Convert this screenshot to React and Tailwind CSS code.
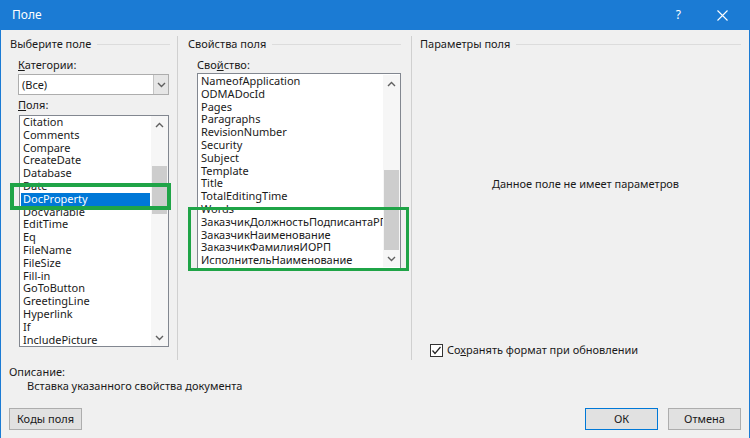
import React from "react";

const leftItems = ["Citation","Comments","Compare","CreateDate","Database","Date","DocProperty","DocVariable","EditTime","Eq","FileName","FileSize","Fill-in","GoToButton","GreetingLine","Hyperlink","If","IncludePicture"];
const midItems = ["NameofApplication","ODMADocId","Pages","Paragraphs","RevisionNumber","Security","Subject","Template","Title","TotalEditingTime","Words","ЗаказчикДолжностьПодписантаРГ","ЗаказчикНаименование","ЗаказчикФамилияИОРП","ИсполнительНаименование"];

function Chevron({ up }) {
  return (
    <svg width="9" height="6" viewBox="0 0 9 6">
      <path d={up ? "M1 5 L4.5 1.5 L8 5" : "M1 1 L4.5 4.5 L8 1"} fill="none" stroke="#606060" strokeWidth="1.4" />
    </svg>
  );
}

function ScrollBar({ thumbTop, thumbH }) {
  return (
    <div className="w-[17px] flex flex-col bg-[#f6f6f6]">
      <div className="h-[17px] flex items-center justify-center"><Chevron up /></div>
      <div className="flex-1 flex flex-col px-[1px]">
        <div style={{ marginTop: thumbTop, height: thumbH }} className="bg-[#cdcdcd]" />
      </div>
      <div className="h-[17px] flex items-center justify-center"><Chevron /></div>
    </div>
  );
}

function GroupHeader({ text }) {
  return (
    <div className="h-[16px] flex items-center gap-[6px]">
      <span className="whitespace-nowrap">{text}</span>
      <div className="flex-1 h-px bg-[#dcdcdc]" />
    </div>
  );
}

export default function App() {
  return (
    <div className="w-[750px] h-[438px] flex flex-col border-x border-[#1b7bd4] bg-[#f0f0f0] text-[11px] leading-[16px] text-[#1a1a1a] font-['Noto_Sans',sans-serif] overflow-hidden relative">
      {/* Title bar */}
      <div className="h-[30px] bg-[#1b7bd4] flex items-center text-white pl-[11px]">
        <span className="text-[12px]">Поле</span>
        <div className="flex-1" />
        <span className="text-[12px] mr-[36px]">?</span>
        <svg width="11" height="11" viewBox="0 0 11 11" className="mr-[21px]">
          <path d="M0.5 0.5 L10.5 10.5 M10.5 0.5 L0.5 10.5" stroke="white" strokeWidth="1.1" />
        </svg>
      </div>

      {/* Body */}
      <div className="flex-1 flex flex-col relative">
        <div className="h-[330px] flex">
          {/* Left column */}
          <div className="w-[176px] pt-[6px] pl-[9px] pr-[7px] flex flex-col">
            <GroupHeader text="Выберите поле" />
            <div className="pl-[8px] pr-[1px] mt-[5px]">
              <div><span className="underline">К</span>атегории:</div>
              <div className="h-[21px] mt-[1px] flex bg-white border border-[#adadad]">
                <div className="flex-1 pl-[3px] flex items-center">(Все)</div>
                <div className="w-[15px] bg-[#e6e6e6] border-l border-[#c4c4c4] flex items-center justify-center"><Chevron /></div>
              </div>
              <div className="mt-[2px]"><span className="underline">П</span>оля:</div>
              <div className="mt-[2px] h-[232px] flex bg-white border border-[#828790] ml-[1px]">
                <div className="flex-1 flex flex-col pl-[1px] pr-[1px]">
                  {leftItems.map((t) => (
                    <div key={t} className={"h-[12.8px] leading-[12.8px] pl-[2px] whitespace-nowrap " + (t === "DocProperty" ? "bg-[#0078d7] text-white" : "")}>{t}</div>
                  ))}
                </div>
                <ScrollBar thumbTop={33} thumbH={48} />
              </div>
            </div>
          </div>
          <div className="w-px mt-[6px] bg-[#d0d0d0]" />

          {/* Middle column */}
          <div className="w-[233px] pt-[6px] pl-[10px] pr-[10px] flex flex-col">
            <GroupHeader text="Свойства поля" />
            <div className="pl-[9px] mt-[5px]">
              <div>Сво<span className="underline">й</span>ство:</div>
              <div className="h-[196px] flex bg-white border border-[#828790] py-[1px]">
                <div className="flex-1 flex flex-col pl-[3px] overflow-hidden">
                  {midItems.map((t) => (
                    <div key={t} className="h-[12.8px] leading-[12.8px] whitespace-nowrap">{t}</div>
                  ))}
                </div>
                <ScrollBar thumbTop={78} thumbH={80} />
              </div>
            </div>
          </div>
          <div className="w-px mt-[6px] bg-[#d0d0d0]" />

          {/* Right column */}
          <div className="flex-1 pt-[6px] pl-[8px] pr-[8px] flex flex-col">
            <GroupHeader text="Параметры поля" />
            <div className="flex-1 flex flex-col">
              <div className="h-[124px]" />
              <div className="text-center pl-[10px]">Данное поле не имеет параметров</div>
              <div className="flex-1" />
              <div className="flex items-center gap-[4px] pl-[10px] mb-[2px]">
                <div className="w-[13px] h-[13px] border border-[#333] bg-white flex items-center justify-center">
                  <svg width="11" height="11" viewBox="0 0 11 11"><path d="M1.5 5.5 L4 8.5 L9.5 2" fill="none" stroke="#222" strokeWidth="1.2" /></svg>
                </div>
                <span>Со<span className="underline">х</span>ранять формат при обновлении</span>
              </div>
            </div>
          </div>
        </div>

        {/* Description */}
        <div className="pl-[8px] pt-[4px]">
          <div>Описание:</div>
          <div className="pl-[18px] mt-[-2px]">Вставка указанного свойства документа</div>
        </div>
        <div className="flex-1" />
        <div className="flex items-center px-[8px] pb-[8px]">
          <div className="w-[73px] h-[22px] border border-[#adadad] bg-[#e1e1e1] flex items-center justify-center">Ко<span className="underline">д</span>ы поля</div>
          <div className="flex-1" />
          <div className="w-[73px] h-[22px] border border-[#0078d7] bg-[#e1e1e1] flex items-center justify-center">ОК</div>
          <div className="w-[73px] h-[22px] border border-[#adadad] bg-[#e1e1e1] flex items-center justify-center ml-[10px]">Отмена</div>
        </div>

        {/* Green highlight overlays */}
        <div className="absolute left-[9px] top-[153px] w-[161px] h-[27px] border-[4px] border-[#1fa447]" />
        <div className="absolute left-[187px] top-[177px] w-[221px] h-[64px] border-[3px] border-[#1fa447]" />
      </div>
    </div>
  );
}
